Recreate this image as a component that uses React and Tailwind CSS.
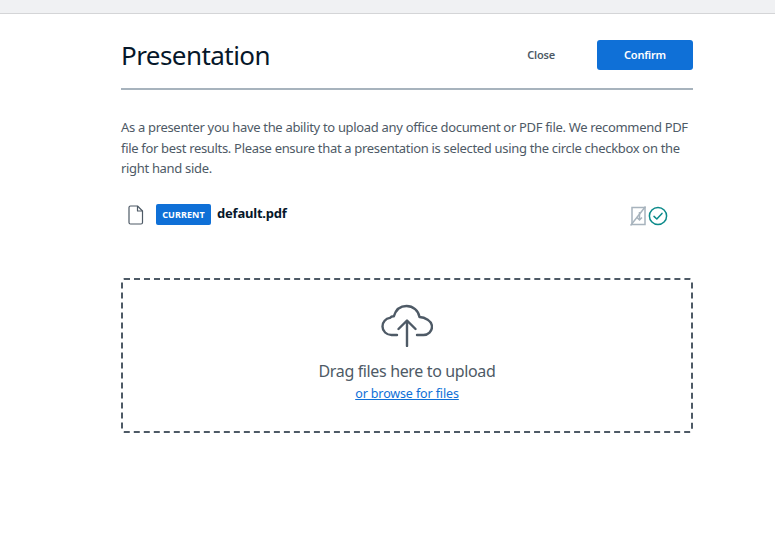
import React from 'react';

const FileIcon = () => (
    <svg width="16" height="20" viewBox="0 0 16 20" fill="none" stroke="#4e5a66" strokeWidth="1.2" strokeLinejoin="round">
        <path d="M2.500 1h7l5 5v11.500a1.500 1.500 0 0 1-1.500 1.500h-10.500a1.500 1.500 0 0 1-1.500-1.500v-15a1.500 1.500 0 0 1 1.500-1.500z" />
        <path d="M9.500 1v5h5" />
    </svg>
);

const NoDownloadIcon = () => (
    <svg width="18" height="20" viewBox="0 0 18 20" fill="none" stroke="#a7b3bd" strokeWidth="1.5">
        <path d="M2 1.500h13v17h-13z" />
        <path d="M9.500 6v8M7 11.500l2.500 2.500 2.500-2.500" />
        <path d="M0.500 19.500L15.500 0.500" />
    </svg>
);

const CheckCircle = () => (
    <svg width="20" height="20" viewBox="0 0 20 20" fill="none" stroke="#0b8a8a" strokeWidth="1.5">
        <circle cx="10" cy="10" r="8.600" />
        <path d="M6 10.400l2.800 2.600 5.200-5.600" strokeLinecap="round" strokeLinejoin="round" />
    </svg>
);

const CloudUpload = () => (
    <svg width="52" height="44" viewBox="0 0 52 44" fill="none" stroke="#4e5a66" strokeWidth="2.4" strokeLinecap="round" strokeLinejoin="round">
        <path d="M16 32h-5.500c-5 0-9-3.800-9-8.600 0-4.400 3.200-7.900 7.400-8.500 1-1.200 2.400-1.800 4-1.700 2-6.600 7-10.200 12.600-10.200 6.600 0 12 4.800 13 11 5.200 0.200 12.500 3.800 12.500 9.800 0 4.600-3.800 8.200-8.500 8.200h-6.500" />
        <path d="M26 43v-25M17.500 26l8.500-8.500 8.500 8.500" />
    </svg>
);

const App = () => {
    return (
        <div className="h-[536px] w-[775px] overflow-hidden bg-white font-['Noto_Sans','Lato',sans-serif]">
            <div className="h-[14px] border-b border-[#d4d5d7] bg-[#f0f1f3]" />

            <div className="ml-[121px] w-[572px] pt-[26px]">
                <div className="flex h-[50px] items-start justify-between border-b-2 border-[#a7b3bd]">
                    <h1 className="text-[26px] leading-[30px] tracking-[-0.55px] text-[#06172a]">Presentation</h1>
                    <div className="flex items-center">
                        <button className="mr-[42px] text-[11px] font-semibold tracking-[-0.2px] text-[#4e5a66]">Close</button>
                        <button className="h-[30px] w-[96px] rounded-[3px] bg-[#0f70d7] text-[11px] font-semibold tracking-[-0.2px] text-white">Confirm</button>
                    </div>
                </div>

                <p className="mt-[27px] text-[13px] leading-[20.5px] tracking-[-0.32px] text-[#4e5a66]">
                    As a presenter you have the ability to upload any office document or PDF file. We recommend PDF file for best results. Please ensure that a presentation is selected using the circle checkbox on the right hand side.
                </p>

                <div className="mt-[24px] flex h-[24px] items-center pl-[7px]">
                    <FileIcon />
                    <span className="ml-[12px] flex h-[21px] w-[55px] items-center justify-center rounded-[2px] bg-[#0f70d7] text-[9px] font-bold tracking-[0.1px] text-white">CURRENT</span>
                    <span className="mb-[2px] ml-[6px] text-[13px] font-bold tracking-[-0.2px] text-[#06172a]">default.pdf</span>
                    <div className="ml-auto mr-[25px] mt-[3px] flex items-center">
                        <NoDownloadIcon />
                        <CheckCircle />
                    </div>
                </div>

                <div className="mt-[51px] flex h-[155px] flex-col items-center rounded-[3px] border-2 border-dashed border-[#4e5a66] pt-[23px]">
                    <CloudUpload />
                    <p className="mt-[13px] text-[16px] leading-[22px] tracking-[-0.36px] text-[#4e5a66]">Drag files here to upload</p>
                    <a href="#" className="mt-[3px] text-[12.5px] leading-[18px] tracking-[-0.13px] text-[#0f70d7] underline">or browse for files</a>
                </div>
            </div>
        </div>
    );
};

export default App;
